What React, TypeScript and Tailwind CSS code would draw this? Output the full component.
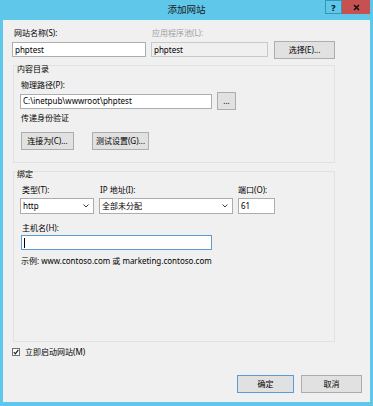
import React from 'react';

const font = { fontFamily: '"Noto Sans", "Noto Sans CJK SC", sans-serif' };

function Btn({ label, w, primary }: { label: string; w: string; primary?: boolean }) {
  return (
    <div
      className={`flex h-[18px] items-center justify-center border bg-[#e1e1e1] text-[8px] leading-none text-black ${w} ${
        primary ? 'border-[#5b9bd5]' : 'border-[#adadad]'
      }`}
    >
      {label}
    </div>
  );
}

function Field({ value, w, disabled, focused }: { value: string; w: string; disabled?: boolean; focused?: boolean }) {
  return (
    <div
      className={`flex h-[15px] items-center border pl-[2px] text-[8px] leading-none ${w} ${
        disabled ? 'border-[#c9c9c9] bg-[#f0f0f0] text-black' : focused ? 'border-[#5b9bd5] bg-white' : 'border-[#abadb3] bg-white text-black'
      }`}
    >
      {focused ? <span className="h-[10px] w-px bg-black" /> : value}
    </div>
  );
}

function Select({ value, w }: { value: string; w: string }) {
  return (
    <div className={`flex h-[16px] items-center justify-between border border-[#acacac] bg-white pl-[2px] pr-[4px] text-[8px] leading-none ${w}`}>
      <span>{value}</span>
      <svg width="6" height="4" viewBox="0 0 6 4" fill="none">
        <path d="M0.5 0.5 L3 3 L5.5 0.5" stroke="#404040" strokeWidth="1" />
      </svg>
    </div>
  );
}

function Label({ children, grey }: { children: React.ReactNode; grey?: boolean }) {
  return <div className={`h-[12px] text-[8px] leading-[12px] ${grey ? 'text-[#a0a0a0]' : 'text-black'}`}>{children}</div>;
}

export default function App() {
  return (
    <div className="h-[406px] w-[373px] bg-[#5fc7ea] px-[3px]" style={font}>
      <div className="grid h-[20px] grid-cols-[1fr_auto_1fr]">
        <div />
        <div className="pt-[4px] text-[9.5px] leading-[12px] text-[#1a1a1a]">添加网站</div>
        <div className="flex justify-end">
          <div className="flex h-[14px] w-[17px] items-center justify-center border border-[#3a94b5] text-[9px] font-bold leading-none text-black">?</div>
          <div className="flex h-[14px] w-[28px] items-center justify-center bg-[#c75050]">
            <svg width="7" height="7" viewBox="0 0 7 7" fill="none">
              <path d="M1 1 L6 6 M6 1 L1 6" stroke="#111" strokeWidth="1.6" />
            </svg>
          </div>
        </div>
      </div>

      <div className="flex h-[382px] flex-col bg-[#f0f0f0] px-[9px]">
        <div className="mt-[7px] flex gap-[5px]">
          <div className="flex w-[134px] flex-col gap-[3px]">
            <div className="pl-[2px]"><Label>网站名称(S):</Label></div>
            <Field value="phptest" w="w-[134px]" />
          </div>
          <div className="flex w-[117px] flex-col gap-[3px]">
            <div className="pl-[1px]"><Label grey>应用程序池(L):</Label></div>
            <Field value="phptest" w="w-[117px]" disabled />
          </div>
          <div className="ml-[1px] mt-[14px]">
            <Btn label="选择(E)..." w="w-[61px]" />
          </div>
        </div>

        <div className="ml-[1px] mt-[6px] flex w-[322px] flex-col border border-[#e2e2e2] pb-[12px] pl-[6px]">
          <div className="-ml-[3px] -mt-[3px]"><Label>内容目录</Label></div>
          <div className="mt-[4px] pl-[1px]"><Label>物理路径(P):</Label></div>
          <div className="mt-[1px] flex h-[18px] items-center gap-[5px]">
            <Field value="C:\inetpub\wwwroot\phptest" w="w-[192px]" />
            <Btn label="..." w="w-[19px]" />
          </div>
          <div className="mt-[2px] pl-[1px]"><Label>传递身份验证</Label></div>
          <div className="ml-[1px] mt-[8px] flex gap-[18px]">
            <Btn label="连接为(C)..." w="w-[53px]" />
            <Btn label="测试设置(G)..." w="w-[57px]" />
          </div>
        </div>

        <div className="ml-[1px] mt-[8px] flex h-[171px] w-[322px] flex-col border border-[#e2e2e2] pl-[6px]">
          <div className="-ml-[3px] -mt-[4px]"><Label>绑定</Label></div>
          <div className="mt-[4px] flex gap-[5px]">
            <div className="flex flex-col gap-[2px]">
              <div className="pl-[2px]"><Label>类型(T):</Label></div>
              <Select value="http" w="w-[74px]" />
            </div>
            <div className="flex flex-col gap-[2px]">
              <div className="pl-[1px]"><Label>IP 地址(I):</Label></div>
              <Select value="全部未分配" w="w-[134px]" />
            </div>
            <div className="flex flex-col gap-[2px]">
              <Label>端口(O):</Label>
              <div className="flex h-[16px] w-[37px] items-center border border-[#abadb3] bg-white pl-[2px] text-[8px] leading-none">61</div>
            </div>
          </div>
          <div className="mt-[8px] pl-[2px]"><Label>主机名(H):</Label></div>
          <div className="ml-[1px] mt-[1px]">
            <Field value="" w="w-[191px]" focused />
          </div>
          <div className="mt-[5px] pl-[1px]"><Label>示例: www.contoso.com 或 marketing.contoso.com</Label></div>
        </div>

        <div className="mt-[4px] flex h-[12px] items-center gap-[5px]">
          <div className="flex h-[8px] w-[8px] items-center justify-center border border-[#707070] bg-white">
            <svg width="6" height="6" viewBox="0 0 6 6" fill="none">
              <path d="M0.8 3.2 L2.4 4.8 L5.3 0.9" stroke="#1a1a1a" strokeWidth="1.2" />
            </svg>
          </div>
          <span className="text-[8px] leading-[12px]">立即启动网站(M)</span>
        </div>

        <div className="mr-[-1px] mt-[17px] flex justify-end gap-[7px]">
          <Btn label="确定" w="w-[57px]" primary />
          <Btn label="取消" w="w-[61px]" />
        </div>
      </div>
    </div>
  );
}
